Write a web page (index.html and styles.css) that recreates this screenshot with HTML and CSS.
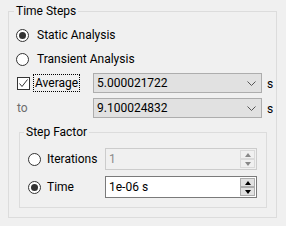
FILE: index.html
```html
<!DOCTYPE html>
<html lang="en">
<head>
    <meta charset="UTF-8">
    <title>Time Steps</title>
    <link rel="stylesheet" href="styles.css">
</head>
<body>
    <fieldset class="group group-time">
        <legend>Time Steps</legend>

        <div class="radio-row">
            <span class="radio checked"></span>
            <span>Static Analysis</span>
        </div>
        <div class="radio-row">
            <span class="radio"></span>
            <span>Transient Analysis</span>
        </div>

        <div class="field-row first">
            <div class="check-label">
                <span class="checkbox">
                    <svg width="11" height="11" viewBox="0 0 11 11"><polyline points="1.5,5.5 4,8.5 9.5,1.5" fill="none" stroke="#333" stroke-width="1"/></svg>
                </span>
                <span class="focus">Average</span>
            </div>
            <div class="combo">
                <span>5.000021722</span>
                <svg class="chevron" width="9" height="5" viewBox="0 0 9 5"><polyline points="0.5,0.5 4.5,4.5 8.5,0.5" fill="none" stroke="#555" stroke-width="1"/></svg>
            </div>
            <span class="unit">s</span>
        </div>

        <div class="field-row">
            <span class="dim">to</span>
            <div class="combo">
                <span>9.100024832</span>
                <svg class="chevron" width="9" height="5" viewBox="0 0 9 5"><polyline points="0.5,0.5 4.5,4.5 8.5,0.5" fill="none" stroke="#555" stroke-width="1"/></svg>
            </div>
            <span class="unit">s</span>
        </div>

        <fieldset class="group group-step">
            <legend>Step Factor</legend>

            <div class="spin-row">
                <div class="spin-choice">
                    <span class="radio"></span>
                    <span>Iterations</span>
                </div>
                <div class="spin disabled">
                    <span class="spin-text">1</span>
                    <div class="spin-btns">
                        <span class="spin-btn"><i class="tri-up"></i></span>
                        <span class="spin-btn"><i class="tri-down"></i></span>
                    </div>
                </div>
            </div>

            <div class="spin-row second">
                <div class="spin-choice">
                    <span class="radio checked"></span>
                    <span>Time</span>
                </div>
                <div class="spin">
                    <span class="spin-text">1e-06 s</span>
                    <div class="spin-btns">
                        <span class="spin-btn"><i class="tri-up"></i></span>
                        <span class="spin-btn"><i class="tri-down"></i></span>
                    </div>
                </div>
            </div>
        </fieldset>
    </fieldset>
</body>
</html>
```

FILE: styles.css
```css
body {
    margin: 0;
    padding: 3px 9px 0 8px;
    background-color: #f0f0f0;
    font-family: Roboto, "Liberation Sans", sans-serif;
    font-size: 12px;
    color: #000;
}

.group {
    margin: 0;
    padding: 0;
    min-inline-size: 0;
    border: 1px solid #dcdcdc;
}
.group legend {
    padding: 0 2px;
    line-height: 16px;
}
.group-time {
    padding-bottom: 9px;
}
.group-time > legend {
    margin-left: 5px;
}
.group-step {
    margin: 6px 9px 0 10px;
    padding: 8px 0 9px 0;
}
.group-step > legend {
    margin-left: 4px;
}

/* radio buttons */
.radio-row {
    display: flex;
    align-items: center;
    height: 24px;
    padding-left: 7px;
}
.radio-row:first-of-type {
    margin-top: 4px;
}
.radio {
    display: inline-block;
    box-sizing: border-box;
    width: 13px;
    height: 13px;
    margin-right: 8px;
    border: 1px solid #333;
    border-radius: 50%;
    background-color: #fff;
    position: relative;
}
.radio.checked::after {
    content: "";
    position: absolute;
    left: 2px;
    top: 2px;
    width: 7px;
    height: 7px;
    border-radius: 50%;
    background-color: #333;
}

/* checkbox + combos */
.field-row {
    display: grid;
    grid-template-columns: 79px 169px auto;
    column-gap: 5px;
    align-items: center;
    height: 20px;
    margin-top: 5px;
}
.field-row.first {
    margin-top: 2px;
}
.check-label {
    display: flex;
    align-items: center;
    padding-left: 8px;
}
.checkbox {
    box-sizing: border-box;
    width: 13px;
    height: 13px;
    border: 1px solid #333;
    background-color: #fff;
    display: flex;
}
.focus {
    margin-left: 3px;
    padding: 0 1px;
    line-height: 16px;
    border: 1px dotted #000;
}
.dim {
    padding-left: 8px;
    color: #6d6d6d;
}
.combo {
    box-sizing: border-box;
    height: 20px;
    display: flex;
    align-items: center;
    justify-content: space-between;
    padding: 0 5px 0 3px;
    border: 1px solid #adadad;
    background-color: #e1e1e1;
}
.unit {
    padding-top: 1px;
}

/* spin boxes */
.spin-row {
    display: grid;
    grid-template-columns: 85px 152px;
    align-items: center;
    height: 22px;
}
.spin-row.second {
    margin-top: 6px;
}
.spin-choice {
    display: flex;
    align-items: center;
    padding-left: 8px;
}
.spin-choice .radio {
    margin-right: 6px;
}
.spin {
    box-sizing: border-box;
    height: 22px;
    display: flex;
    align-items: center;
    justify-content: space-between;
    padding-left: 3px;
    border: 1px solid #7a7a7a;
    background-color: #fff;
}
.spin.disabled {
    border-color: #cccccc;
    background-color: #f0f0f0;
    color: #8a8a8a;
}
.spin-btns {
    display: flex;
    flex-direction: column;
    padding: 1px;
}
.spin-btn {
    box-sizing: border-box;
    width: 15px;
    height: 9px;
    display: flex;
    align-items: center;
    justify-content: center;
    border: 1px solid #adadad;
    background-color: #e1e1e1;
}
.spin.disabled .spin-btn {
    border-color: #dadada;
    background-color: #f0f0f0;
}
.tri-up, .tri-down {
    width: 0;
    height: 0;
    border-left: 3.5px solid transparent;
    border-right: 3.5px solid transparent;
}
.tri-up {
    border-bottom: 4px solid #000;
}
.tri-down {
    border-top: 4px solid #000;
}
.spin.disabled .tri-up {
    border-bottom-color: #888;
}
.spin.disabled .tri-down {
    border-top-color: #888;
}
```
